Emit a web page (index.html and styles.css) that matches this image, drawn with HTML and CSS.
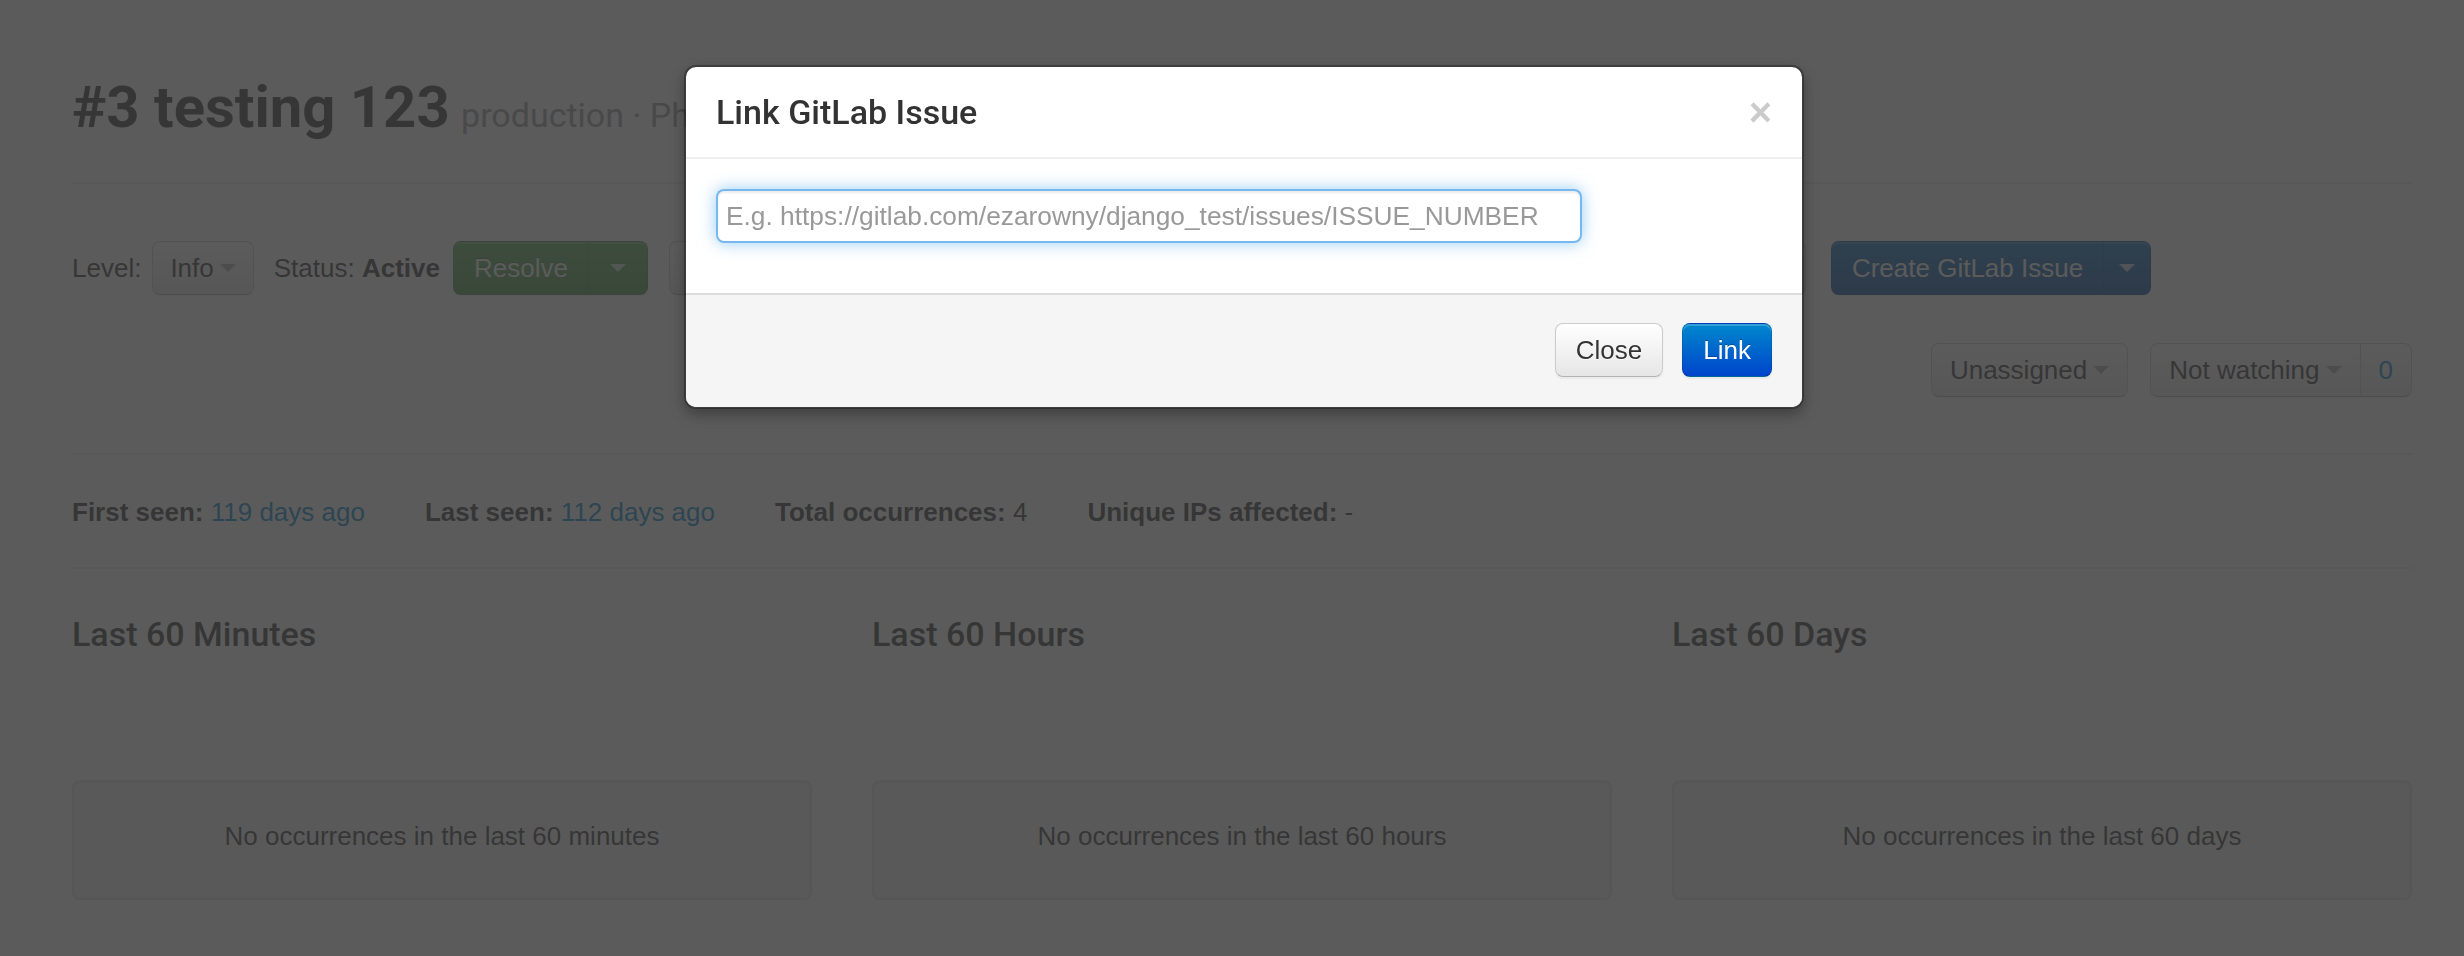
FILE: index.html
```html
<!DOCTYPE html>
<html lang="en">
<head>
    <meta charset="UTF-8">
    <meta name="viewport" content="width=device-width, initial-scale=1.0">
    <title>#3 testing 123</title>
    <link rel="stylesheet" href="styles.css">
</head>
<body>
<div class="container">
    <div class="page-header">
        <h2>#3 testing 123 <small>production · PhantomJS</small></h2>
    </div>

    <div class="toolbar">
        <span class="level-label">Level:</span>
        <button class="btn btn-level">Info <span class="caret"></span></button>
        <span class="status">Status: <strong>Active</strong></span>
        <div class="btn-group">
            <button class="btn btn-success">Resolve</button>
            <button class="btn btn-success btn-caret wide"><span class="caret"></span></button>
        </div>
        <div class="extra-actions">
            <button class="btn">Mute</button>
            <button class="btn">Delete</button>
            <button class="btn">Link GitLab Issue</button>
        </div>
        <div class="btn-group create-issue">
            <button class="btn btn-primary">Create GitLab Issue</button>
            <button class="btn btn-primary btn-caret"><span class="caret"></span></button>
        </div>
    </div>

    <div class="toolbar toolbar-right">
        <button class="btn btn-select">Unassigned <span class="caret"></span></button>
        <div class="btn-group">
            <button class="btn btn-select">Not watching <span class="caret"></span></button>
            <button class="btn count">0</button>
        </div>
    </div>

    <hr class="first-rule">

    <div class="stats">
        <span><strong>First seen:</strong> <a href="#">119 days ago</a></span>
        <span><strong>Last seen:</strong> <a href="#">112 days ago</a></span>
        <span><strong>Total occurrences:</strong> 4</span>
        <span><strong>Unique IPs affected:</strong> -</span>
    </div>

    <hr>

    <div class="charts">
        <div class="chart-col">
            <h4>Last 60 Minutes</h4>
            <div class="chart"></div>
            <div class="well">No occurrences in the last 60 minutes</div>
        </div>
        <div class="chart-col">
            <h4>Last 60 Hours</h4>
            <div class="chart"></div>
            <div class="well">No occurrences in the last 60 hours</div>
        </div>
        <div class="chart-col">
            <h4>Last 60 Days</h4>
            <div class="chart"></div>
            <div class="well">No occurrences in the last 60 days</div>
        </div>
    </div>
</div>

<div class="modal-backdrop"></div>

<div class="modal">
    <div class="modal-header">
        <h3>Link GitLab Issue</h3>
        <button class="close">&times;</button>
    </div>
    <div class="modal-body">
        <input type="text" class="issue-input" placeholder="E.g. https://gitlab.com/ezarowny/django_test/issues/ISSUE_NUMBER">
    </div>
    <div class="modal-footer">
        <button class="btn">Close</button>
        <button class="btn btn-primary">Link</button>
    </div>
</div>
</body>
</html>
```

FILE: styles.css
```css
body {
    margin: 0;
    font-family: "Liberation Sans", Arial, sans-serif;
    font-size: 26px;
    line-height: 36px;
    color: #333;
    background: #fff;
}

a {
    color: #0088cc;
    text-decoration: none;
}

.container {
    width: 2340px;
    margin-left: 72px;
    padding-top: 67px;
}

.page-header {
    padding-bottom: 35px;
    border-bottom: 2px solid #eee;
}

h2 {
    margin: 0;
    font-family: Roboto, sans-serif;
    font-weight: 700;
    font-size: 58px;
    line-height: 80px;
    color: #333;
    white-space: nowrap;
}

h2 small {
    margin-left: -3px;
    font-weight: 400;
    font-size: 34px;
    line-height: 1;
    color: #999;
}

.toolbar {
    display: flex;
    align-items: center;
    margin-top: 57px;
}

.toolbar-right {
    justify-content: flex-end;
    margin-top: 48px;
    gap: 22px;
}

.level-label {
    margin-right: 11px;
}

.status {
    margin-left: 20px;
    margin-right: 13px;
}

.btn {
    display: inline-flex;
    align-items: center;
    box-sizing: border-box;
    height: 54px;
    padding: 0 20px;
    font: inherit;
    color: #333;
    text-shadow: 0 1px 1px rgba(255, 255, 255, 0.75);
    background: linear-gradient(#ffffff, #e6e6e6);
    border: 1px solid #cccccc;
    border-bottom-color: #b3b3b3;
    border-radius: 8px;
    box-shadow: inset 0 2px 0 rgba(255, 255, 255, 0.2), 0 2px 2px rgba(0, 0, 0, 0.05);
    cursor: pointer;
}

.btn-level {
    padding: 0 17px;
}

.btn-select {
    padding: 0 18px;
}

.btn-success {
    color: #fff;
    text-shadow: 0 -1px 0 rgba(0, 0, 0, 0.25);
    background: linear-gradient(#56ad56, #489348);
    border-color: rgba(0, 0, 0, 0.1) rgba(0, 0, 0, 0.1) rgba(0, 0, 0, 0.25);
}

.btn-primary {
    color: #fff;
    text-shadow: 0 -1px 0 rgba(0, 0, 0, 0.25);
    background: linear-gradient(#0088cc, #0044cc);
    border-color: rgba(0, 0, 0, 0.1) rgba(0, 0, 0, 0.1) rgba(0, 0, 0, 0.25);
}

.create-issue .btn-primary {
    background: linear-gradient(#0a6cb4, #0a4ca6);
}

.btn-group {
    display: flex;
}

.btn-group .btn:first-child {
    border-radius: 8px 0 0 8px;
}

.btn-group .btn + .btn {
    margin-left: -1px;
    border-radius: 0 8px 8px 0;
}

.btn-caret {
    padding: 0 15px;
}

.btn-caret.wide {
    padding: 0 21px;
}

.btn.count {
    padding: 0 18px;
    color: #0088cc;
}

.caret {
    width: 0;
    height: 0;
    margin-left: 6px;
    border-left: 8px solid transparent;
    border-right: 8px solid transparent;
    border-top: 8px solid #000;
    opacity: 0.3;
}

.btn-caret .caret {
    margin-left: 0;
}

.btn-success .caret,
.btn-primary .caret {
    border-top-color: #fff;
    opacity: 0.75;
}

.extra-actions {
    display: flex;
    gap: 21px;
    width: 1137px;
    margin-left: 21px;
}

.extra-actions .btn {
    flex: 1;
}

.create-issue {
    margin-left: 25px;
}

hr {
    margin: 0;
    border: 0;
    border-top: 2px solid #eee;
}

.first-rule {
    margin-top: 56px;
}

.stats {
    display: flex;
    gap: 60px;
    padding: 39px 0 37px;
}

.charts {
    display: grid;
    grid-template-columns: repeat(3, 740px);
    column-gap: 60px;
    margin-top: 43px;
}

h4 {
    margin: 0;
    font-family: Roboto, sans-serif;
    font-weight: 500;
    font-size: 34px;
    line-height: 44px;
    color: #333;
}

.chart {
    height: 124px;
}

.well {
    display: flex;
    align-items: center;
    justify-content: center;
    box-sizing: border-box;
    height: 120px;
    padding-bottom: 8px;
    background: #f5f5f5;
    border: 2px solid #e3e3e3;
    border-radius: 8px;
    box-shadow: inset 0 2px 2px rgba(0, 0, 0, 0.05);
}

.modal-backdrop {
    position: fixed;
    top: 0;
    right: 0;
    bottom: 0;
    left: 0;
    background: rgba(55, 55, 55, 0.82);
}

.modal {
    position: fixed;
    top: 65px;
    left: 684px;
    width: 1120px;
    box-sizing: border-box;
    background: #fff;
    background-clip: padding-box;
    border: 2px solid rgba(0, 0, 0, 0.3);
    border-radius: 12px;
    box-shadow: 0 6px 14px rgba(0, 0, 0, 0.3);
}

.modal-header {
    display: flex;
    justify-content: space-between;
    align-items: center;
    padding: 18px 30px;
    border-bottom: 2px solid #eee;
}

.modal-header h3 {
    margin: 0;
    font-family: Roboto, sans-serif;
    font-weight: 500;
    font-size: 34px;
    line-height: 54px;
    color: #333;
}

.close {
    padding: 0;
    font: bold 40px/54px "Liberation Sans", Arial, sans-serif;
    color: #000;
    opacity: 0.2;
    background: none;
    border: 0;
    cursor: pointer;
}

.modal-body {
    padding: 30px 30px 50px;
}

.issue-input {
    display: block;
    box-sizing: border-box;
    width: 866px;
    height: 54px;
    padding: 0 8px;
    font: 26.3px "Liberation Sans", Arial, sans-serif;
    color: #555;
    border: 2px solid rgba(82, 168, 236, 0.8);
    border-radius: 8px;
    box-shadow: inset 0 2px 2px rgba(0, 0, 0, 0.075), 0 0 16px rgba(82, 168, 236, 0.6);
    outline: none;
}

.issue-input::placeholder {
    color: #999;
}

.modal-footer {
    display: flex;
    justify-content: flex-end;
    gap: 19px;
    padding: 28px 30px 30px;
    background: #f5f5f5;
    border-top: 2px solid #ddd;
    border-radius: 0 0 10px 10px;
}
```
